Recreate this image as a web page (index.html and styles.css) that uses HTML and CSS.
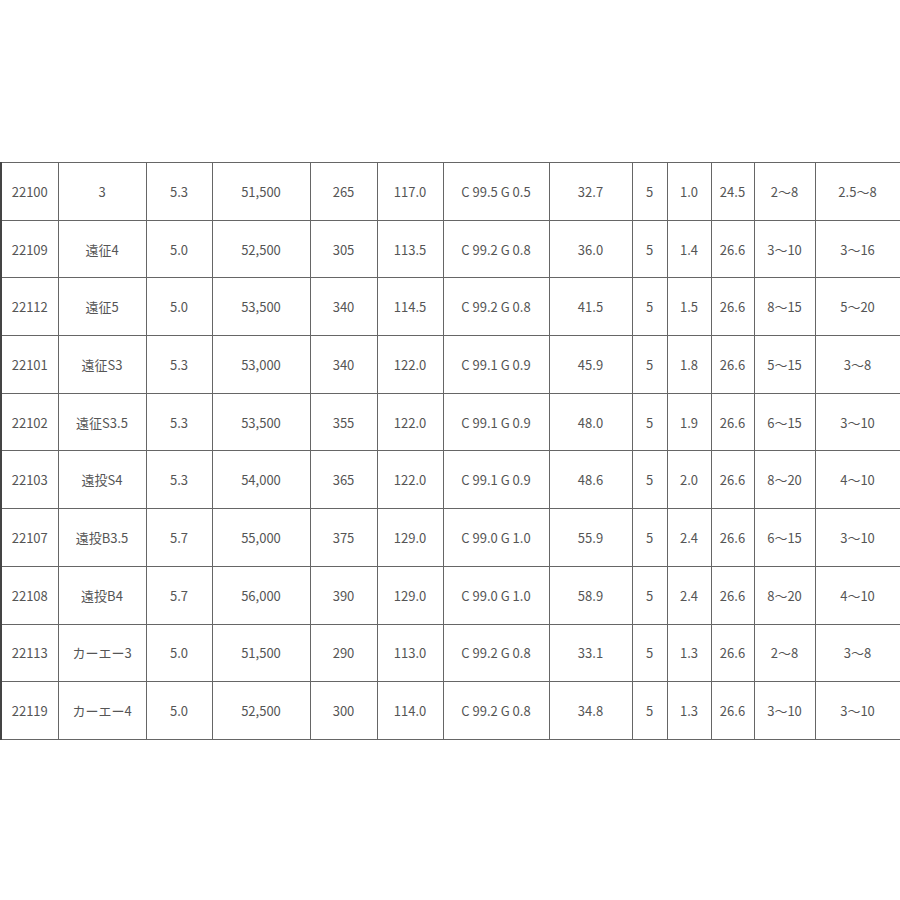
FILE: index.html
```html
<!DOCTYPE html>
<html lang="ja">
<head>
<meta charset="utf-8">
<link rel="stylesheet" href="styles.css">
</head>
<body>
<table class="spec">
<colgroup>
<col class="c1"><col class="c2"><col class="c3"><col class="c4"><col class="c5"><col class="c6"><col class="c7"><col class="c8"><col class="c9"><col class="c10"><col class="c11"><col class="c12"><col class="c13">
</colgroup>
<tbody>
<tr><td>22100</td><td>3</td><td>5.3</td><td>51,500</td><td>265</td><td>117.0</td><td>C 99.5 G 0.5</td><td>32.7</td><td>5</td><td>1.0</td><td>24.5</td><td>2～8</td><td>2.5～8</td></tr>
<tr><td>22109</td><td>遠征4</td><td>5.0</td><td>52,500</td><td>305</td><td>113.5</td><td>C 99.2 G 0.8</td><td>36.0</td><td>5</td><td>1.4</td><td>26.6</td><td>3～10</td><td>3～16</td></tr>
<tr><td>22112</td><td>遠征5</td><td>5.0</td><td>53,500</td><td>340</td><td>114.5</td><td>C 99.2 G 0.8</td><td>41.5</td><td>5</td><td>1.5</td><td>26.6</td><td>8～15</td><td>5～20</td></tr>
<tr><td>22101</td><td>遠征S3</td><td>5.3</td><td>53,000</td><td>340</td><td>122.0</td><td>C 99.1 G 0.9</td><td>45.9</td><td>5</td><td>1.8</td><td>26.6</td><td>5～15</td><td>3～8</td></tr>
<tr><td>22102</td><td>遠征S3.5</td><td>5.3</td><td>53,500</td><td>355</td><td>122.0</td><td>C 99.1 G 0.9</td><td>48.0</td><td>5</td><td>1.9</td><td>26.6</td><td>6～15</td><td>3～10</td></tr>
<tr><td>22103</td><td>遠投S4</td><td>5.3</td><td>54,000</td><td>365</td><td>122.0</td><td>C 99.1 G 0.9</td><td>48.6</td><td>5</td><td>2.0</td><td>26.6</td><td>8～20</td><td>4～10</td></tr>
<tr><td>22107</td><td>遠投B3.5</td><td>5.7</td><td>55,000</td><td>375</td><td>129.0</td><td>C 99.0 G 1.0</td><td>55.9</td><td>5</td><td>2.4</td><td>26.6</td><td>6～15</td><td>3～10</td></tr>
<tr><td>22108</td><td>遠投B4</td><td>5.7</td><td>56,000</td><td>390</td><td>129.0</td><td>C 99.0 G 1.0</td><td>58.9</td><td>5</td><td>2.4</td><td>26.6</td><td>8～20</td><td>4～10</td></tr>
<tr><td>22113</td><td>カーエー3</td><td>5.0</td><td>51,500</td><td>290</td><td>113.0</td><td>C 99.2 G 0.8</td><td>33.1</td><td>5</td><td>1.3</td><td>26.6</td><td>2～8</td><td>3～8</td></tr>
<tr><td>22119</td><td>カーエー4</td><td>5.0</td><td>52,500</td><td>300</td><td>114.0</td><td>C 99.2 G 0.8</td><td>34.8</td><td>5</td><td>1.3</td><td>26.6</td><td>3～10</td><td>3～10</td></tr>
</tbody>
</table>
</body>
</html>
```
FILE: styles.css
```css
html, body {
  margin: 0;
  padding: 0;
  background: #fff;
}
body {
  padding-top: 162px;
  font-family: "Noto Sans CJK JP", "Noto Sans", sans-serif;
  font-size: 13px;
  color: #555;
}
.spec {
  border-collapse: collapse;
  table-layout: fixed;
  width: 900px;
  border-left: 2px solid #444;
}
.spec td {
  border: 1px solid #666;
  height: 56.7px;
  padding: 0;
  text-align: center;
  vertical-align: middle;
  white-space: nowrap;
}
.c1 { width: 57px; }
.c2 { width: 88px; }
.c3 { width: 66px; }
.c4 { width: 98px; }
.c5 { width: 67px; }
.c6 { width: 66px; }
.c7 { width: 106px; }
.c8 { width: 83px; }
.c9 { width: 35px; }
.c10 { width: 44px; }
.c11 { width: 43px; }
.c12 { width: 61px; }
.c13 { width: 85px; }
```
